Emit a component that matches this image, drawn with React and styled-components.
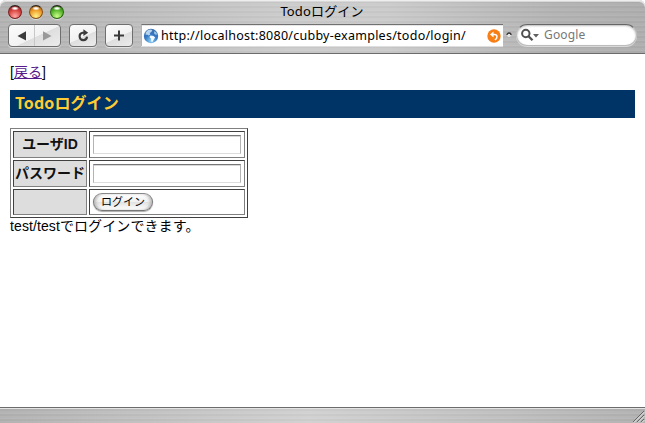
import React from 'react';
import styled, { createGlobalStyle } from 'styled-components';

const Global = createGlobalStyle`
  * { box-sizing: border-box; }
  html, body { margin: 0; background: #fff; }
`;

const chromeFont = '"Noto Sans", "Noto Sans CJK JP", sans-serif';
const pageFont = '"Liberation Sans", "Noto Sans CJK JP", sans-serif';
const metal = `repeating-linear-gradient(180deg, rgba(255,255,255,.08) 0 1px, rgba(0,0,0,.02) 1px 3px, rgba(255,255,255,.04) 3px 5px)`;

const Window = styled.div`
  width: 645px;
  height: 423px;
  display: flex;
  flex-direction: column;
  overflow: hidden;
  background: #fff;
`;

const Chrome = styled.header`
  height: 54px;
  flex: none;
  border-radius: 6px 6px 0 0;
  border-bottom: 1px solid #6c6c6c;
  background: ${metal}, linear-gradient(90deg, #b2b2b2, #bababa 16%, #cbcbcb 45%, #cacaca 60%, #b2b2b2 86%, #adadad);
  box-shadow: inset 0 1px #eee, inset 0 2px #d8d8d8;
`;

const TitleBar = styled.div`
  height: 24px;
  display: grid;
  grid-template-columns: 72px 1fr 73px;
  align-items: center;
`;

const Lights = styled.div`
  display: flex;
  gap: 7px;
  padding-left: 8px;
`;

const Light = styled.span`
  width: 14px;
  height: 14px;
  border-radius: 50%;
  border: 1px solid ${p => p.$edge};
  border-top-color: #26201e;
  background:
    radial-gradient(ellipse 4px 2px at 50% 20%, #fff 30%, rgba(255,255,255,0) 100%),
    radial-gradient(circle at 50% 85%, ${p => p.$glow}, ${p => p.$color} 55%, ${p => p.$edge} 95%);
  box-shadow: 0 1px 0 rgba(255,255,255,.5);
`;

const Title = styled.div`
  text-align: center;
  font: 13px/20px ${chromeFont};
  letter-spacing: 0.15px;
  padding-bottom: 2px;
  color: #000;
  white-space: nowrap;
`;

const Toolbar = styled.div`
  display: flex;
  align-items: flex-start;
  height: 29px;
  padding: 0 8px;
`;

const ToolButton = styled.div`
  width: ${p => p.$width}px;
  height: 23px;
  margin-right: 8px;
  border: 1px solid #6f6f6f;
  border-radius: 4px;
  background: linear-gradient(155deg, #fcfcfc 0%, #f2f2f2 54%, #dedede 55%, #ececec 100%);
  box-shadow: 0 1px rgba(255,255,255,.6);
  svg { display: block; }
`;

const AddressBar = styled.div`
  width: 362px;
  height: 22px;
  display: flex;
  align-items: center;
  padding: 0 2px 0 1px;
  background: #fff;
  border-top: 1px solid #717171;
  border-left: 1px solid #b4b4b4;
  box-shadow: inset 0 1px #e7e7e7, 0 1px #dedede;
`;

const Address = styled.span`
  flex: 1;
  padding-left: 2px;
  font: 12.5px/20px ${chromeFont};
  letter-spacing: 0.26px;
  color: #000;
  white-space: nowrap;
`;

const Knob = styled.svg`
  width: 6px;
  height: 6px;
  margin: 8px 4px 0 3px;
`;

const Search = styled.div`
  width: 121px;
  height: 22px;
  display: flex;
  align-items: center;
  padding-left: 4px;
  border-radius: 11px;
  background: #fff;
  border: 1px solid #bcbcbc;
  border-top-color: #666;
  box-shadow: inset 0 1px 2px #bbb, 0 1px #d9d9d9;
  font: 12px/20px ${chromeFont};
  letter-spacing: 0.15px;
  color: #777;
  svg { margin-right: 5px; }
`;

const Page = styled.main`
  flex: 1;
  padding: 9px 10px 0;
  font: 14px/18px ${pageFont};
  color: #000;
`;

const BackLine = styled.div`
  height: 18px;
  a { color: #551a8b; text-decoration: underline; }
`;

const Heading = styled.h1`
  height: 28px;
  margin: 9px 0 10px;
  padding-left: 5px;
  background: #036;
  color: #fc3;
  font: bold 16px/25px "Noto Sans CJK JP", sans-serif;
  letter-spacing: 0.1px;
`;

const FormTable = styled.div`
  width: 238px;
  height: 90px;
  display: grid;
  grid-template-columns: 74px 156px;
  grid-template-rows: 27px 27px 26px;
  gap: 2px;
  padding: 2px;
  border: 1px solid;
  border-color: #808080 #404040 #404040 #808080;
`;

const cellBorder = `
  border: 1px solid;
  border-color: #404040 #808080 #808080 #404040;
`;

const LabelCell = styled.div`
  ${cellBorder}
  background: #ddd;
  color: #111;
  text-align: center;
  font-weight: bold;
  line-height: 25px;
  white-space: nowrap;
`;

const FieldCell = styled.div`
  ${cellBorder}
  padding: 3px;
`;

const TextInput = styled.input`
  display: block;
  width: 148px;
  height: 19px;
  padding: 2px;
  outline: none;
  border: 1px solid #b4b4b4;
  border-top: 1px solid #777;
  border-bottom-color: #ddd;
  border-radius: 0;
  background: #fff;
  box-shadow: inset 0 1px #d7d7d7;
`;

const LoginButton = styled.button`
  display: block;
  width: 60px;
  height: 18px;
  padding: 0;
  border: 1px solid #777;
  border-top-color: #888;
  border-radius: 9px;
  background: linear-gradient(180deg, #fff 0%, #f1f1f1 48%, #e3e3e3 52%, #fff 100%);
  box-shadow: inset 3px 0 3px -1px #bbb, inset -3px 0 3px -1px #bbb, 0 1px 1px #aaa;
  font: 11px/15px ${pageFont};
  color: #000;
`;

const Note = styled.div`
  line-height: 17px;
  letter-spacing: 0.1px;
`;

const StatusBar = styled.footer`
  height: 16px;
  flex: none;
  display: flex;
  justify-content: flex-end;
  align-items: flex-end;
  border-top: 1px solid #6c6c6c;
  background: ${metal}, linear-gradient(90deg, #b0b0b0, #bcbcbc 16%, #d0d0d0 48%, #bcbcbc 82%, #b0b0b0);
  box-shadow: inset 0 1px #e3e3e3;
`;

const Globe = () => (
  <svg width="16" height="16" viewBox="0 0 16 16">
    <defs>
      <radialGradient id="sea" cx=".5" cy=".85" r=".8">
        <stop offset="0" stopColor="#8fd0f7" />
        <stop offset=".55" stopColor="#3579c4" />
        <stop offset="1" stopColor="#3b6dac" />
      </radialGradient>
    </defs>
    <circle cx="8" cy="8" r="7.2" fill="url(#sea)" />
    <path d="M2.6 4.5 5 2l3-.5 1.4 1L8 4.2 6.6 5l.8 1.4L5.5 7.6 4 6.4 2.8 7z" fill="#b5d5f1" />
    <path d="M7.5 7.6 10.5 8l1.6 1.4-1.3 2L9.4 14l-1.2-.6-.2-2.6-1.6-1.7z" fill="#f2f9ff" />
    <path d="M11 3.2l2 .8 1.2 2.6-1.6.2-1.4-1.5z" fill="#9cc5e8" />
  </svg>
);

const SnapBack = () => (
  <svg width="14" height="14" viewBox="0 0 14 14">
    <circle cx="7" cy="7" r="6.7" fill="#f77f16" />
    <path d="M3 5.5 6.5 2.6v5.8z" fill="#fff" />
    <path d="M5 5.5h2.4c3.4 0 3.3 4 .4 5.2" fill="none" stroke="#fff" strokeWidth="1.5" />
  </svg>
);

export default function App() {
  return (
    <>
      <Global />
      <Window>
        <Chrome>
          <TitleBar>
            <Lights>
              <Light $color="#d8423e" $glow="#ffaaa5" $edge="#762220" />
              <Light $color="#f09a25" $glow="#fff38c" $edge="#875016" />
              <Light $color="#55b52a" $glow="#cdff8a" $edge="#2c6515" />
            </Lights>
            <Title>Todoログイン</Title>
          </TitleBar>
          <Toolbar>
            <ToolButton $width={53}>
              <svg width="51" height="21" viewBox="0 0 51 21">
                <path d="M25.5 0v21" stroke="#c8c8c8" />
                <path d="M17 6.2v9.4L8.5 10.9z" fill="#3b3b3b" />
                <path d="M34 6.2v9.4l8.5-4.7z" fill="#999" />
              </svg>
            </ToolButton>
            <ToolButton $width={28}>
              <svg width="26" height="21" viewBox="0 0 26 21">
                <path d="M14.4 7.8H12.5a3.7 3.7 0 1 0 4.5 3.8" fill="none" stroke="#3b3b3b" strokeWidth="2.1" />
                <path d="M13.4 4.3 18.2 7.8 13.4 11z" fill="#3b3b3b" />
              </svg>
            </ToolButton>
            <ToolButton $width={28}>
              <svg width="26" height="21" viewBox="0 0 26 21">
                <path d="M13 5.5v10M8 10.5h10" stroke="#3b3b3b" strokeWidth="2" />
              </svg>
            </ToolButton>
            <AddressBar>
              <Globe />
              <Address>http://localhost:8080/cubby-examples/todo/login/</Address>
              <SnapBack />
            </AddressBar>
            <Knob viewBox="0 0 6 6">
              <circle cx="3" cy="3" r="2" fill="#e5e5e5" />
              <path d="M1 3a2 2 0 0 1 4 0" fill="none" stroke="#333" strokeWidth="1.3" />
            </Knob>
            <Search>
              <svg width="18" height="14" viewBox="0 0 18 14">
                <circle cx="4.8" cy="5.5" r="3.7" fill="none" stroke="#505050" strokeWidth="2" />
                <path d="m7.5 8.3 4 4" stroke="#505050" strokeWidth="2.3" />
                <path d="M12 6h6l-3 3.4z" fill="#606060" />
              </svg>
              Google
            </Search>
          </Toolbar>
        </Chrome>
        <Page>
          <BackLine>[<a>戻る</a>]</BackLine>
          <Heading>Todoログイン</Heading>
          <FormTable>
            <LabelCell>ユーザID</LabelCell>
            <FieldCell><TextInput /></FieldCell>
            <LabelCell>パスワード</LabelCell>
            <FieldCell><TextInput type="password" /></FieldCell>
            <LabelCell />
            <FieldCell><LoginButton>ログイン</LoginButton></FieldCell>
          </FormTable>
          <Note>test/testでログインできます。</Note>
        </Page>
        <StatusBar>
          <svg width="14" height="13" viewBox="0 0 14 13">
            <path d="M2 12 13 1M6 12l7-7M10 12l3-3" stroke="#666" />
            <path d="M3 12.5 13.5 2M7 12.5 13.5 6M11 12.5l2.5-2.5" stroke="#e6e6e6" />
          </svg>
        </StatusBar>
      </Window>
    </>
  );
}
